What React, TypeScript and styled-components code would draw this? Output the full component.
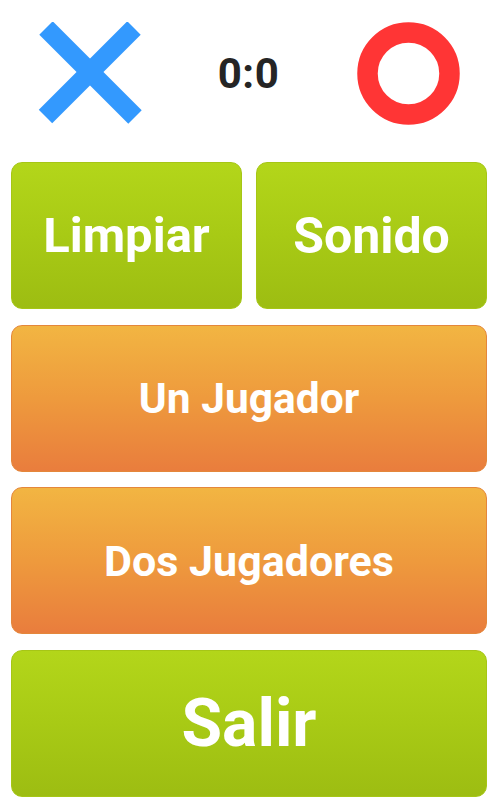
import * as React from 'react';
import styled, { createGlobalStyle } from 'styled-components';

const GlobalStyle = createGlobalStyle`
  html, body {
    margin: 0;
    padding: 0;
    background: #ffffff;
  }
  body {
    font-family: Roboto, "Liberation Sans", sans-serif;
  }
`;

const Screen = styled.div`
  width: 501px;
  height: 800px;
  box-sizing: border-box;
  padding: 0 14px 0 11px;
  display: flex;
  flex-direction: column;
  background: #fff;
`;

const Header = styled.div`
  height: 162px;
  box-sizing: border-box;
  padding: 22px 27px 38px 27px;
  display: flex;
  align-items: center;
  justify-content: space-between;
`;

const Score = styled.div`
  font-size: 42px;
  font-weight: 700;
  color: #252525;
  letter-spacing: 0.5px;
  margin-top: 1px;
  margin-right: 2px;
`;

const Grid = styled.div`
  display: grid;
  grid-template-columns: 1fr 1fr;
  grid-auto-rows: 147px;
  column-gap: 14px;
  row-gap: 15.5px;
`;

const Button = styled.button<{ $tone: 'green' | 'orange'; $size: number; $wide?: boolean }>`
  grid-column: ${(p) => (p.$wide ? '1 / span 2' : 'auto')};
  border: 1px solid ${(p) => (p.$tone === 'green' ? '#a6c616' : '#e4873b')};
  border-radius: 11px;
  background: ${(p) =>
    p.$tone === 'green'
      ? 'linear-gradient(180deg, #b3d61a 0%, #a8ca15 50%, #9dbd12 100%)'
      : 'linear-gradient(180deg, #f2b542 0%, #ee9a3d 50%, #e97d3d 100%)'};
  color: #ffffff;
  font-family: Roboto, "Liberation Sans", sans-serif;
  font-weight: 700;
  font-size: ${(p) => p.$size}px;
  display: flex;
  align-items: center;
  justify-content: center;
  padding: 0;
  cursor: pointer;
`;

const XMark = () => (
  <svg width="104" height="102" viewBox="0 0 104 102">
    <g stroke="#3399fe" strokeWidth="19" strokeLinecap="butt">
      <line x1="8" y1="6" x2="97" y2="95" />
      <line x1="96" y1="6" x2="7.5" y2="94.5" />
    </g>
  </svg>
);

const OMark = () => (
  <svg width="103" height="103" viewBox="0 0 103 103">
    <circle cx="51.5" cy="51.5" r="41" fill="none" stroke="#ff3535" strokeWidth="20.5" />
  </svg>
);

const App = () => {
  return (
    <>
      <GlobalStyle />
      <Screen>
        <Header>
          <XMark />
          <Score>0:0</Score>
          <OMark />
        </Header>
        <Grid>
          <Button $tone="green" $size={49}>Limpiar</Button>
          <Button $tone="green" $size={50}>Sonido</Button>
          <Button $tone="orange" $size={42.5} $wide>Un Jugador</Button>
          <Button $tone="orange" $size={43} $wide>Dos Jugadores</Button>
          <Button $tone="green" $size={66} $wide>Salir</Button>
        </Grid>
      </Screen>
    </>
  );
};

export default App;
